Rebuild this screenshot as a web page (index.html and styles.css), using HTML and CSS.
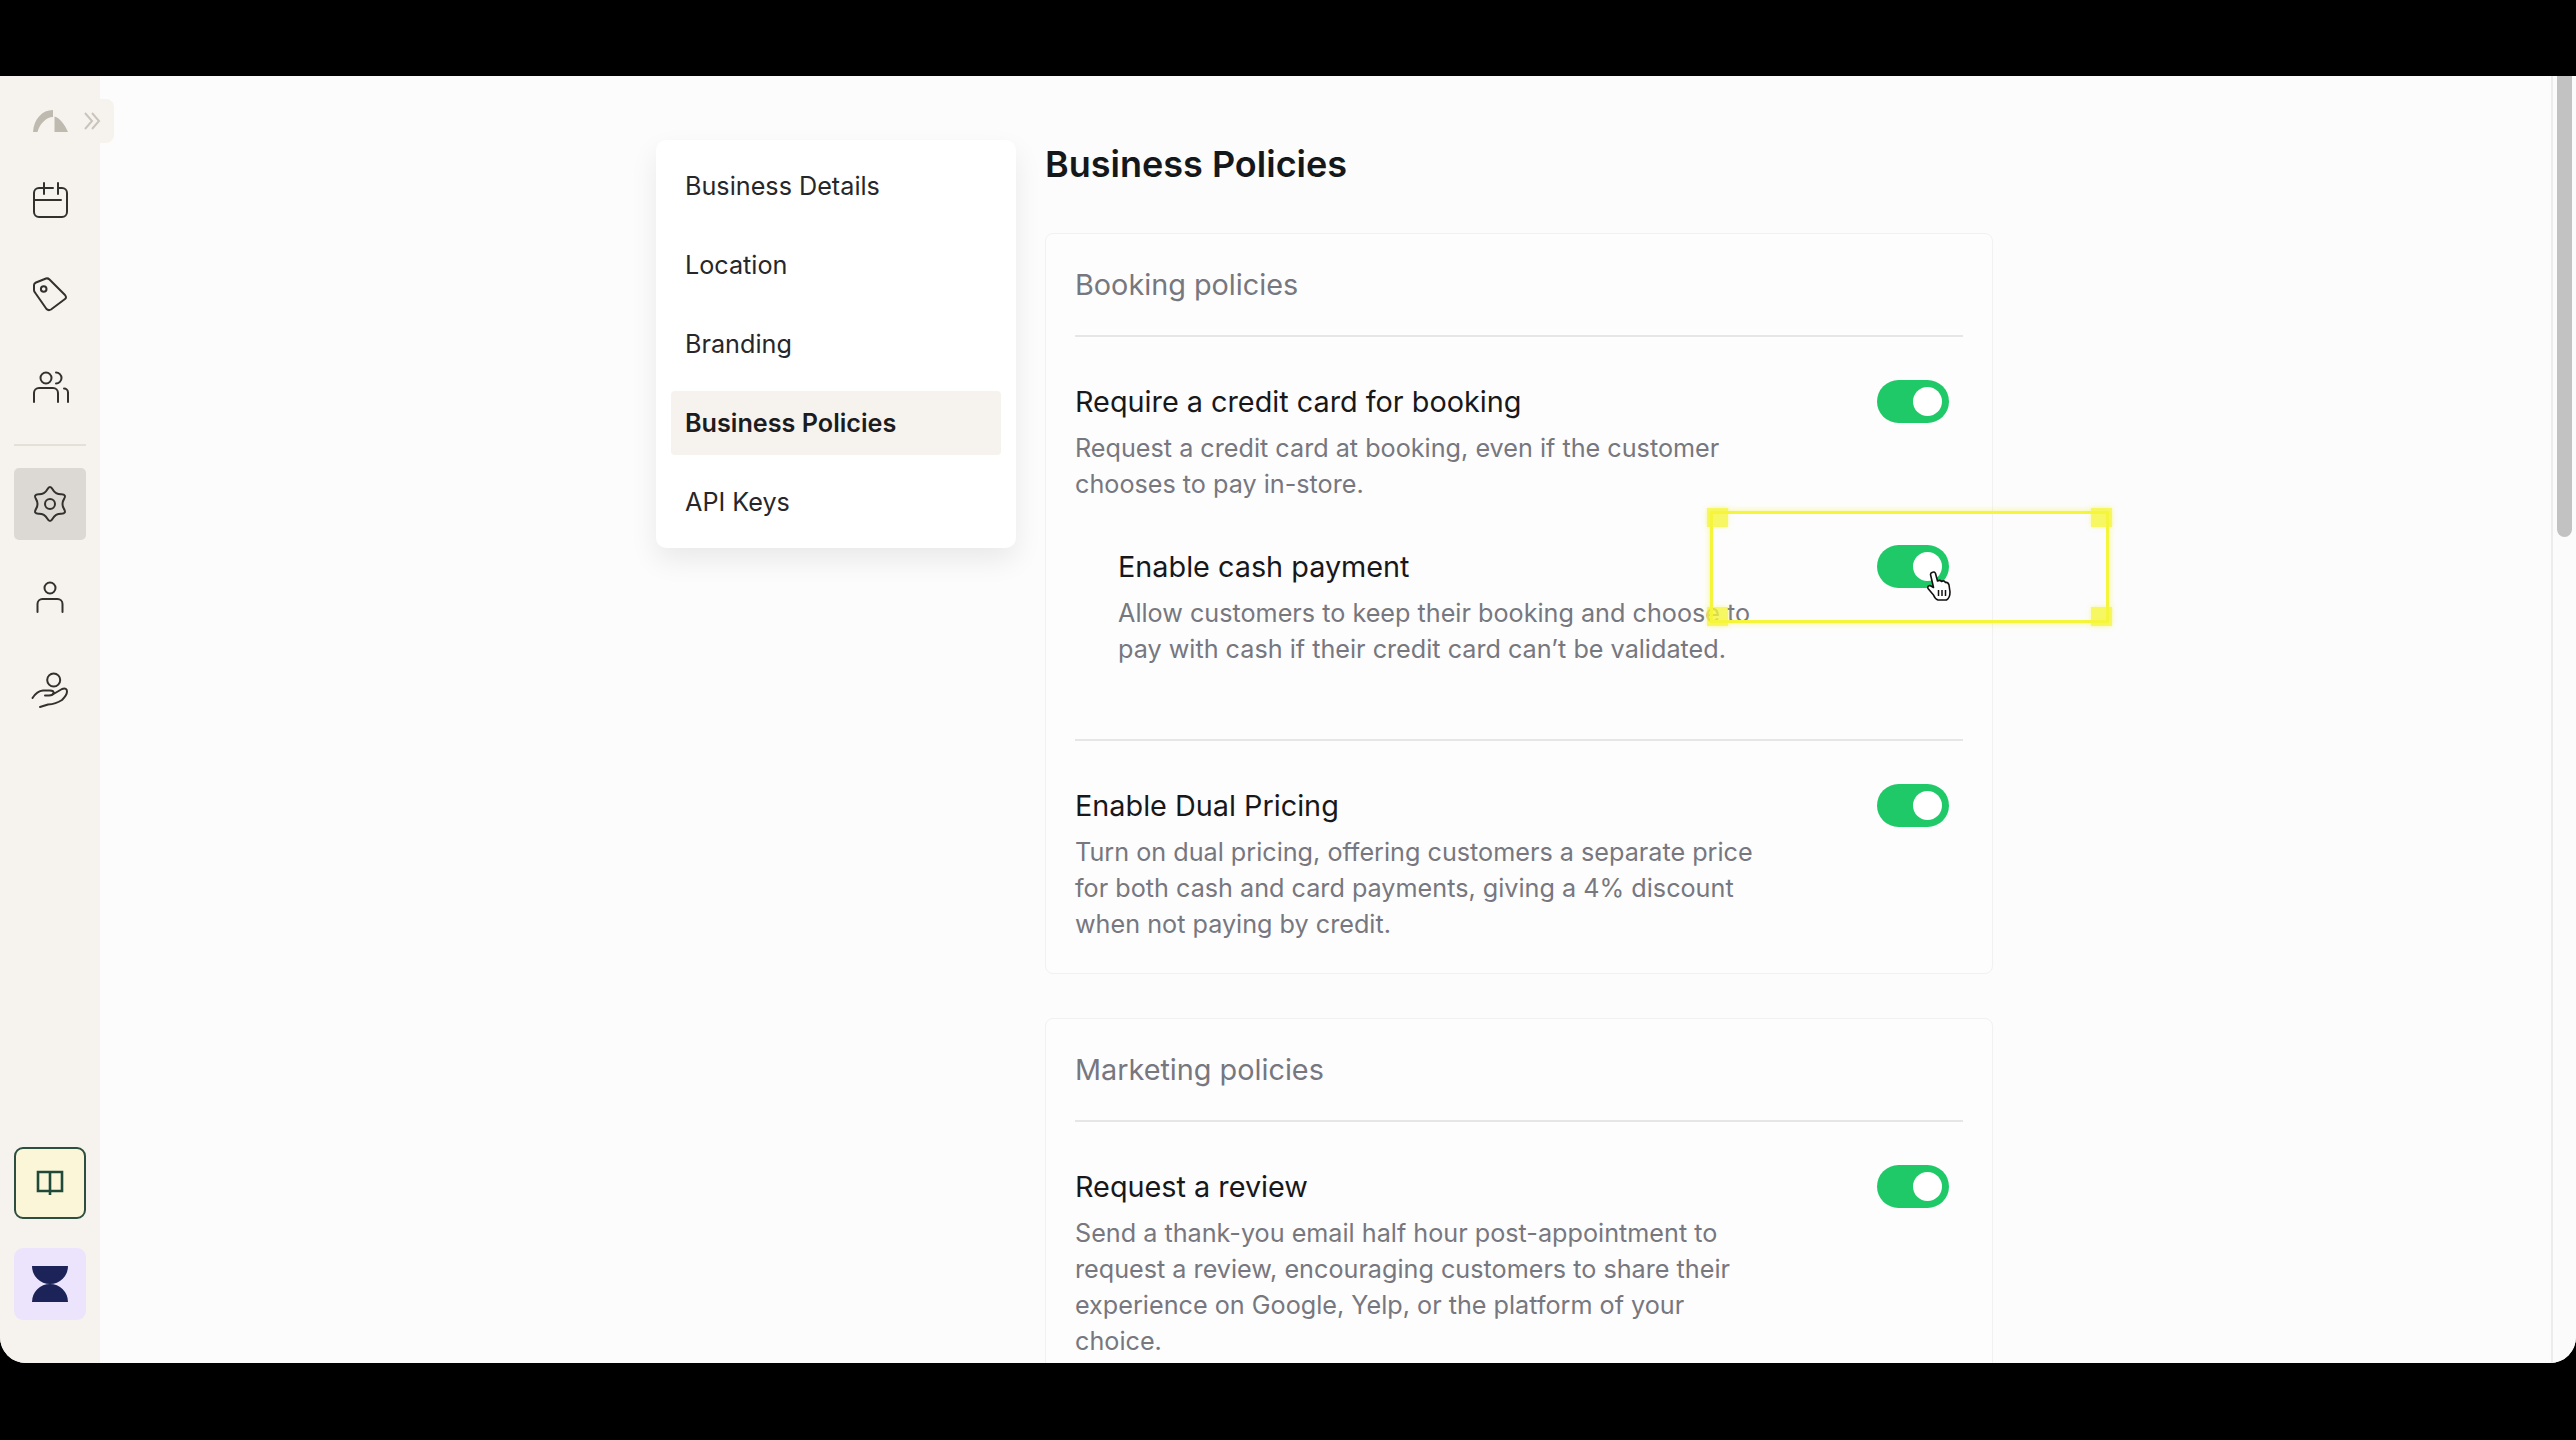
FILE: index.html
```html
<!DOCTYPE html>
<html lang="en">
<head>
  <meta charset="UTF-8">
  <meta name="viewport" content="width=device-width, initial-scale=1.0">
  <title>Business Policies</title>
  <link rel="stylesheet" href="styles.css">
</head>
<body>
  <div class="app">
    <aside class="sidebar">
      <div class="side-item side-logo">
        <svg width="40" height="40" viewBox="0 0 40 40"><path class="logo-shape" d="M3 32C4 19 12 10 23 10V17C17 17 10 23 7.500 32Z"/><path class="logo-shape" d="M24.500 16.500C30 18 35 25 38 32H24.500Z"/></svg>
      </div>
      <div class="side-item side-calendar">
        <svg width="40" height="40" viewBox="0 0 40 40" class="line-icon"><path d="M14 8H9a5 5 0 0 0-5 5V32a5 5 0 0 0 5 5H32a5 5 0 0 0 5-5V13a5 5 0 0 0-5-5H28"/><path d="M14 3V14M28 3V14M14 8H23M4 20H31"/></svg>
      </div>
      <div class="side-item side-tag">
        <svg width="40" height="40" viewBox="0 0 40 40" class="line-icon"><path d="M4 11Q4 9.500 6 8.500L16 4.500Q18 4 19.500 5.500L35 21Q37 23.500 35 25L21 35.500Q18.500 37 16.500 35L5 18.500Q4 17.500 4 16Z"/><circle cx="13.700" cy="15" r="2.800"/></svg>
      </div>
      <div class="side-item side-people">
        <svg width="40" height="40" viewBox="0 0 40 40" class="line-icon"><circle cx="16" cy="11" r="5.500"/><path d="M4 35V26a5 5 0 0 1 5-5H23a5 5 0 0 1 5 5V35M26 5.500a5.500 5.500 0 0 1 0 11M34 21.500a4 4 0 0 1 4 4V35"/></svg>
      </div>
      <div class="side-divider"></div>
      <div class="side-item side-active">
        <svg width="40" height="40" viewBox="0 0 40 40" class="line-icon"><path d="M17.250 5.490Q20 .5 22.750 5.490Q25.500 10.470 31.200 10.360Q36.890 10.250 33.950 15.130Q31 20 33.950 24.880Q36.890 29.750 31.200 29.640Q25.500 29.530 22.750 34.520Q20 39.500 17.250 34.520Q14.500 29.530 8.800 29.640Q3.110 29.750 6.050 24.880Q9 20 6.050 15.130Q3.110 10.250 8.800 10.360Q14.500 10.470 17.250 5.490Z"/><circle cx="20" cy="20" r="5"/></svg>
      </div>
      <div class="side-item side-person">
        <svg width="40" height="40" viewBox="0 0 40 40" class="line-icon"><circle cx="20" cy="11" r="5.500"/><path d="M7.500 35V27a5 5 0 0 1 5-5H27.500a5 5 0 0 1 5 5V35"/></svg>
      </div>
      <div class="side-item side-hand">
        <svg width="40" height="40" viewBox="0 0 40 40" class="line-icon"><circle cx="23.700" cy="10" r="6.500"/><path d="M2.500 28Q7 21 13 20.500H20Q24 20.500 23.500 23Q23 25.500 19 25.500H15M23.500 24L32 19Q37 17.500 37 21.500Q37 25 32 30Q26 34 18 34.500L10 37"/></svg>
      </div>
      <div class="side-bottom">
        <div class="side-book">
          <svg width="32" height="32" viewBox="0 0 32 32"><path d="M16 5H4V24H16M16 24H28V5H16ZM16 24V28"/></svg>
        </div>
        <div class="side-timer">
          <svg width="40" height="40" viewBox="0 0 40 40"><path d="M2 2H38A18 18 0 0 1 20 20A18 18 0 0 1 2 2ZM20 20A18 18 0 0 1 38 38H2A18 18 0 0 1 20 20Z"/></svg>
        </div>
      </div>
    </aside>

    <main class="main">
      <nav class="settings-nav">
        <a class="nav-item">Business Details</a>
        <a class="nav-item">Location</a>
        <a class="nav-item">Branding</a>
        <a class="nav-item nav-item-active">Business Policies</a>
        <a class="nav-item">API Keys</a>
      </nav>
      <section class="content">
        <h1 class="page-title">Business Policies</h1>

        <div class="card">
          <h2 class="card-title">Booking policies</h2>
          <div class="policy">
            <div class="policy-text">
              <div class="policy-name">Require a credit card for booking</div>
              <p class="policy-desc">Request a credit card at booking, even if the customer chooses to pay in-store.</p>
            </div>
            <span class="toggle"></span>
          </div>
          <div class="policy policy-sub">
            <div class="policy-text">
              <div class="policy-name">Enable cash payment</div>
              <p class="policy-desc">Allow customers to keep their booking and choose to pay with cash if their credit card can’t be validated.</p>
            </div>
            <span class="toggle"></span>
          </div>
          <div class="policy policy-divided">
            <div class="policy-text">
              <div class="policy-name">Enable Dual Pricing</div>
              <p class="policy-desc">Turn on dual pricing, offering customers a separate price for both cash and card payments, giving a 4% discount when not paying by credit.</p>
            </div>
            <span class="toggle"></span>
          </div>
        </div>

        <div class="card">
          <h2 class="card-title">Marketing policies</h2>
          <div class="policy">
            <div class="policy-text">
              <div class="policy-name">Request a review</div>
              <p class="policy-desc">Send a thank-you email half hour post-appointment to request a review, encouraging customers to share their experience on Google, Yelp, or the platform of your choice.</p>
            </div>
            <span class="toggle"></span>
          </div>
        </div>
      </section>
    </main>

    <div class="scrollbar"><div class="scroll-thumb"></div></div>

    <!-- collapse tab sits over the sidebar edge -->
    <div class="collapse-tab">
      <svg width="18" height="20" viewBox="0 0 18 20"><path d="M2 2L9 10L2 18M9 2L16 10L9 18"/></svg>
    </div>

    <!-- highlight box from the recording -->
    <div class="highlight">
      <i class="handle handle-tl"></i><i class="handle handle-tr"></i>
      <i class="handle handle-bl"></i><i class="handle handle-br"></i>
    </div>
    <svg class="cursor" width="26" height="32" viewBox="0 0 26 32"><path d="M6 2.500Q8.500 1 9.500 3.500L11.500 11Q14 9.500 15.500 11.500Q18 10 19.500 12.500Q22 12 23 15L24 22Q24 28 20.500 30H12Q9 29 7.500 25L2 18.500Q1 16 4 15.500L7.500 17.500L4.500 4.500Q4.500 3 6 2.500Z"/><path class="cursor-lines" d="M12.500 20V26M16 20V26M19.500 20V26"/></svg>
  </div>
</body>
</html>
```

FILE: styles.css
```css
* {
  box-sizing: border-box;
}

html, body {
  height: 100%;
  margin: 0;
  overflow: hidden;
}

body {
  background-color: #000;
  padding: 76px 0 77px;
  font-family: Inter, "Liberation Sans", sans-serif;
}

.app {
  position: relative;
  display: flex;
  height: 1287px;
  background-color: #fcfcfc;
  border-radius: 0 0 26px 26px;
  overflow: hidden;
}

/* sidebar */
.sidebar {
  flex: 0 0 100px;
  display: flex;
  flex-direction: column;
  align-items: center;
  background-color: #f6f3ee;
  padding: 24px 1px 0 0;
}

.side-item {
  display: flex;
  align-items: center;
  justify-content: center;
  width: 72px;
  height: 40px;
}

.side-calendar { margin-top: 40px; }
.side-tag { margin-top: 54px; }
.side-people { margin-top: 53px; }
.side-person { margin-top: 37px; }
.side-hand { margin-top: 53px; }

.side-divider {
  width: 72px;
  height: 2px;
  margin-top: 37px;
  background-color: #e3e0da;
}

.side-active {
  height: 72px;
  margin-top: 22px;
  background-color: #dcd9d4;
  border-radius: 5px;
}

.logo-shape {
  fill: #bfbab0;
}

.line-icon {
  fill: none;
  stroke: #33312e;
  stroke-width: 2;
  stroke-linecap: round;
  stroke-linejoin: round;
}

.side-bottom {
  margin-top: auto;
  margin-bottom: 43px;
  display: flex;
  flex-direction: column;
  gap: 29px;
}

.side-book, .side-timer {
  display: flex;
  align-items: center;
  justify-content: center;
  width: 72px;
  height: 72px;
  border-radius: 9px;
}

.side-book {
  background-color: #fbf6d8;
  border: 2px solid #2d4f42;
}

.side-book svg {
  fill: none;
  stroke: #1f4a3a;
  stroke-width: 2.6;
}

.side-timer {
  background-color: #ece3fd;
}

.side-timer svg {
  fill: #1c2359;
}

/* main area */
.main {
  flex: 1;
  display: flex;
  align-items: flex-start;
  gap: 29px;
  padding: 64px 0 0 556px;
  min-width: 0;
}

.settings-nav {
  flex: 0 0 360px;
  display: flex;
  flex-direction: column;
  gap: 15px;
  padding: 14px 15px;
  background-color: #fff;
  border-radius: 10px;
  box-shadow: 0 12px 28px rgba(0, 0, 0, 0.08);
}

.nav-item {
  display: block;
  height: 64px;
  padding: 0 14px;
  font-size: 25.2px;
  line-height: 64px;
  color: #27272a;
  border-radius: 4px;
}

.nav-item-active {
  background-color: #f6f3ee;
  font-weight: 600;
  color: #1c1c1f;
}

.content {
  flex: 0 0 948px;
}

.page-title {
  margin: 0 0 45px;
  font-size: 36px;
  line-height: 48px;
  font-weight: 600;
  color: #15181b;
}

.card {
  margin-bottom: 44px;
  padding: 31px 29px;
  background-color: #fdfdfd;
  border: 1px solid #f1f1f1;
  border-radius: 8px;
}

.card-title {
  margin: 0;
  padding-bottom: 30px;
  font-size: 28.8px;
  line-height: 40px;
  font-weight: 400;
  color: #77777f;
  border-bottom: 2px solid #e6e6e6;
}

.policy {
  display: flex;
  justify-content: space-between;
  align-items: flex-start;
  padding: 43px 14px 0 0;
}

.policy-sub {
  padding-left: 43px;
  padding-bottom: 72px;
}

.policy-divided {
  border-top: 2px solid #e6e6e6;
}

.policy-text {
  max-width: 690px;
}

.policy-sub .policy-text {
  max-width: 640px;
}

.policy-name {
  font-size: 28.8px;
  line-height: 44px;
  color: #18181b;
}

.policy-desc {
  margin: 6px 0 0;
  font-size: 25.2px;
  line-height: 36px;
  color: #77777f;
}

.toggle {
  position: relative;
  flex: 0 0 72px;
  height: 43px;
  background-color: #20c968;
  border-radius: 22px;
}

.toggle:after {
  content: '';
  position: absolute;
  top: 7px;
  right: 7px;
  width: 29px;
  height: 29px;
  background-color: #fff;
  border-radius: 50%;
}

.scrollbar {
  position: absolute;
  top: 0;
  right: 0;
  bottom: 0;
  width: 25px;
  background-color: #fbfbfb;
  border-left: 2px solid #ececec;
}

.scroll-thumb {
  width: 15px;
  height: 461px;
  margin-left: 4px;
  background-color: #c2c2c2;
  border-radius: 0 0 8px 8px;
}

/* things lying over the page */
.collapse-tab {
  position: absolute;
  top: 23px;
  left: 76px;
  display: flex;
  align-items: center;
  justify-content: flex-start;
  width: 38px;
  height: 44px;
  padding-left: 7px;
  background-color: #f6f3ee;
  border-radius: 0 8px 8px 0;
}

.collapse-tab svg {
  fill: none;
  stroke: #c9c5bc;
  stroke-width: 2;
}

.highlight {
  position: absolute;
  left: 1710px;
  top: 435px;
  width: 399px;
  height: 112px;
  border: 3px solid #f5f53c;
  box-shadow: 0 0 6px rgba(245, 245, 60, 0.6);
}

/* text under a handle still shows through, as in the recording */
.handle {
  position: absolute;
  width: 21px;
  height: 19px;
  background-color: rgba(245, 245, 60, 0.8);
  box-shadow: 0 0 4px rgba(245, 245, 60, 0.5);
}

.handle-tl { top: -6px; left: -6px; }
.handle-tr { top: -6px; right: -6px; }
.handle-bl { bottom: -6px; left: -6px; }
.handle-br { bottom: -6px; right: -6px; }

.cursor {
  position: absolute;
  left: 1926px;
  top: 494px;
  fill: #fff;
  stroke: #111;
  stroke-width: 1.600;
  stroke-linejoin: round;
}

.cursor .cursor-lines {
  fill: none;
  stroke-width: 1.500;
}
```
